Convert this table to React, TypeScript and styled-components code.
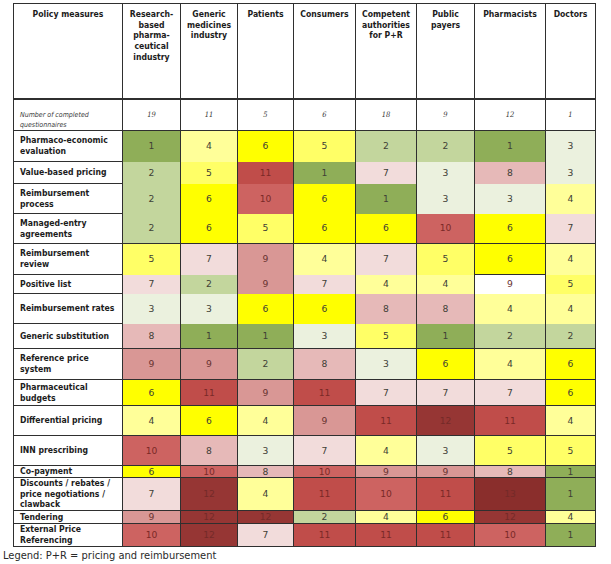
import React from "react";
import styled, { createGlobalStyle } from "styled-components";

const GlobalStyle = createGlobalStyle`
  html, body { margin: 0; padding: 0; background: #ffffff; }
  body { font-family: "DejaVu Sans Condensed", "DejaVu Sans", sans-serif; color: #1a1a1a; }
`;

const LINE = "#2f2f2f";

const palette: Record<number, string> = {
  1: "#8fae58",
  2: "#c3d69d",
  3: "#ebf1de",
  4: "#ffff99",
  5: "#ffff66",
  6: "#ffff00",
  7: "#f2dcdb",
  8: "#e6b9b8",
  9: "#d99795",
  10: "#cd6361",
  11: "#c04d4a",
  12: "#963634",
  13: "#8a2e2c",
};

const textFor = (v: number) => {
  if (v <= 8) return "#404036";
  if (v === 9) return "#683230";
  if (v <= 11) return "#7a2927";
  return "#742a28";
};

const columns = [
  "Research-\nbased\npharma-\nceutical\nindustry",
  "Generic\nmedicines\nindustry",
  "Patients",
  "Consumers",
  "Competent\nauthorities\nfor P+R",
  "Public\npayers",
  "Pharmacists",
  "Doctors",
];

const widths = [109, 58, 57, 56, 62, 61, 58, 71, 50];

const counts = [19, 11, 5, 6, 18, 9, 12, 1];

type Row = { label: string; h: number; ruled: boolean; values: number[] };

const rows: Row[] = [
  { label: "Pharmaco-economic\nevaluation", h: 31, ruled: false, values: [1, 4, 6, 5, 2, 2, 1, 3] },
  { label: "Value-based pricing", h: 22, ruled: false, values: [2, 5, 11, 1, 7, 3, 8, 3] },
  { label: "Reimbursement\nprocess", h: 30, ruled: false, values: [2, 6, 10, 6, 1, 3, 3, 4] },
  { label: "Managed-entry\nagreements", h: 30, ruled: true, values: [2, 6, 5, 6, 6, 10, 6, 7] },
  { label: "Reimbursement\nreview", h: 31, ruled: false, values: [5, 7, 9, 4, 7, 5, 6, 4] },
  { label: "Positive list", h: 19, ruled: false, values: [7, 2, 9, 7, 4, 4, 9, 5] },
  { label: "Reimbursement rates", h: 30, ruled: false, values: [3, 3, 6, 6, 8, 8, 4, 4] },
  { label: "Generic substitution", h: 25, ruled: true, values: [8, 1, 1, 3, 5, 1, 2, 2] },
  { label: "Reference price\nsystem", h: 31, ruled: true, values: [9, 9, 2, 8, 3, 6, 4, 6] },
  { label: "Pharmaceutical\nbudgets", h: 26, ruled: true, values: [6, 11, 9, 11, 7, 7, 7, 6] },
  { label: "Differential pricing", h: 30, ruled: true, values: [4, 6, 4, 9, 11, 12, 11, 4] },
  { label: "INN prescribing", h: 30, ruled: true, values: [10, 8, 3, 7, 4, 3, 5, 5] },
  { label: "Co-payment", h: 12, ruled: true, values: [6, 10, 8, 10, 9, 9, 8, 1] },
  { label: "Discounts / rebates /\nprice negotiations /\nclawback", h: 33, ruled: true, values: [7, 12, 4, 11, 10, 11, 13, 1] },
  { label: "Tendering", h: 13, ruled: true, values: [9, 12, 12, 2, 4, 6, 12, 4] },
  { label: "External Price\nReferencing", h: 23, ruled: true, values: [10, 12, 7, 11, 11, 11, 10, 1] },
];

// cells drawn in a different colour than the value scale would give
const overrides: Record<string, string> = {
  "5-6": "#ffffff",
};

const Page = styled.div`
  padding: 3px 0 0 3px;
  width: 608px;
`;

const Grid = styled.table`
  margin-left: 10px;
  border-collapse: collapse;
  table-layout: fixed;
  width: 583px;
`;

const Line = styled.tr<{ $h: number }>`
  height: ${(p) => p.$h}px;
`;

const HeadCell = styled.th`
  border: 1px solid ${LINE};
  border-bottom: 2px solid ${LINE};
  vertical-align: top;
  text-align: center;
  padding: 5px 2px 0;
  font-size: 8.6px;
  line-height: 10.7px;
  font-weight: bold;
  color: #1c1c1c;
  white-space: pre-line;
`;

const CountLabel = styled.td`
  border: 1px solid ${LINE};
  padding: 10px 4px 0 6px;
  vertical-align: top;
  font-style: italic;
  font-size: 7px;
  line-height: 10px;
  color: #3a3a3a;
  white-space: pre-line;
`;

const CountCell = styled.td`
  border: 1px solid ${LINE};
  text-align: center;
  vertical-align: top;
  padding-top: 10px;
  font-style: italic;
  font-size: 7.5px;
  line-height: 10px;
  color: #3a3a3a;
  font-family: "DejaVu Serif Condensed", "DejaVu Serif", serif;
`;

const LabelCell = styled.td`
  border: 1px solid ${LINE};
  padding: 0 3px 0 6px;
  vertical-align: middle;
  font-size: 8.6px;
  line-height: 10.6px;
  font-weight: bold;
  color: #1c1c1c;
  white-space: pre-line;
  overflow: hidden;
`;

const ValueCell = styled.td<{ $bg: string; $fg: string; $ruled: boolean; $boxed: boolean }>`
  background: ${(p) => p.$bg};
  color: ${(p) => p.$fg};
  border-left: 1px solid ${LINE};
  border-right: 1px solid ${LINE};
  border-top: ${(p) => (p.$boxed ? `1px solid ${LINE}` : "none")};
  border-bottom: ${(p) => (p.$ruled ? `1px solid ${LINE}` : "none")};
  padding: 0;
  text-align: center;
  vertical-align: middle;
  font-family: "DejaVu Sans", sans-serif;
  font-size: 9.2px;
  line-height: 10px;
`;

const Legend = styled.div`
  margin-top: 3px;
  font-size: 11px;
  line-height: 12px;
  color: #2a2a2a;
`;

export default function App() {
  return (
    <Page>
      <GlobalStyle />
      <Grid>
        <colgroup>
          {widths.map((w, i) => (
            <col key={i} style={{ width: w }} />
          ))}
        </colgroup>
        <tbody>
          <Line $h={95}>
            <HeadCell>Policy measures</HeadCell>
            {columns.map((c) => (
              <HeadCell key={c}>{c}</HeadCell>
            ))}
          </Line>
          <Line $h={32}>
            <CountLabel>{"Number of completed\nquestionnaires"}</CountLabel>
            {counts.map((n, i) => (
              <CountCell key={i}>{n}</CountCell>
            ))}
          </Line>
          {rows.map((r, ri) => (
            <Line $h={r.h} key={r.label}>
              <LabelCell>{r.label}</LabelCell>
              {r.values.map((v, ci) => {
                const key = `${ri}-${ci}`;
                const bg = overrides[key] ?? palette[v];
                return (
                  <ValueCell
                    key={ci}
                    $bg={bg}
                    $fg={textFor(v)}
                    $ruled={r.ruled}
                    $boxed={key in overrides}
                  >
                    {v}
                  </ValueCell>
                );
              })}
            </Line>
          ))}
        </tbody>
      </Grid>
      <Legend>Legend: P+R = pricing and reimbursement</Legend>
    </Page>
  );
}
